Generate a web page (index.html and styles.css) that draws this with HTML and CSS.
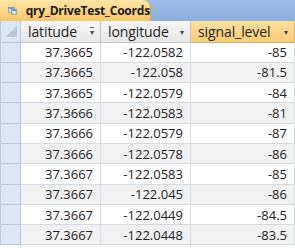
FILE: index.html
```html
<!DOCTYPE html>
<html lang="en">
<head>
  <meta charset="UTF-8" />
  <title>qry_DriveTest_Coords</title>
  <link rel="stylesheet" href="styles.css">
</head>
<body>
  <div class="tabs">
    <div class="tab">
      <svg class="tab-icon" width="16" height="14" viewBox="0 0 16 14">
        <rect x="0.5" y="0.5" width="11" height="9" fill="#fff" stroke="#4a6fa5"/>
        <rect x="1" y="1" width="10" height="2" fill="#5b86c5"/>
        <line x1="1" y1="5.5" x2="11" y2="5.5" stroke="#9ab"/>
        <line x1="1" y1="7.5" x2="11" y2="7.5" stroke="#9ab"/>
        <rect x="6.5" y="4.5" width="9" height="9" fill="#fff" stroke="#4a6fa5"/>
        <rect x="7" y="5" width="8" height="2" fill="#5b86c5"/>
        <line x1="7" y1="9.5" x2="15" y2="9.5" stroke="#9ab"/>
        <line x1="7" y1="11.5" x2="15" y2="11.5" stroke="#9ab"/>
      </svg>
      <span class="tab-title">qry_DriveTest_Coords</span>
    </div>
  </div>

  <table class="grid">
    <thead>
      <tr>
        <th class="sel sel-corner"><span class="corner"></span></th>
        <th class="col-lat"><div class="head">latitude <span class="arrow sorted">&#9662;</span></div></th>
        <th class="col-lon"><div class="head">longitude <span class="arrow">&#9662;</span></div></th>
        <th class="col-sig active"><div class="head">signal_level <span class="arrow">&#9662;</span></div></th>
      </tr>
    </thead>
    <tbody>
      <tr><td class="sel"></td><td>37.3665</td><td>-122.0582</td><td>-85</td></tr>
      <tr><td class="sel"></td><td>37.3665</td><td>-122.058</td><td>-81.5</td></tr>
      <tr><td class="sel"></td><td>37.3665</td><td>-122.0579</td><td>-84</td></tr>
      <tr><td class="sel"></td><td>37.3666</td><td>-122.0583</td><td>-81</td></tr>
      <tr><td class="sel"></td><td>37.3666</td><td>-122.0579</td><td>-87</td></tr>
      <tr><td class="sel"></td><td>37.3666</td><td>-122.0578</td><td>-86</td></tr>
      <tr><td class="sel"></td><td>37.3667</td><td>-122.0583</td><td>-85</td></tr>
      <tr><td class="sel"></td><td>37.3667</td><td>-122.045</td><td>-86</td></tr>
      <tr><td class="sel"></td><td>37.3667</td><td>-122.0449</td><td>-84.5</td></tr>
      <tr><td class="sel"></td><td>37.3667</td><td>-122.0448</td><td>-83.5</td></tr>
    </tbody>
  </table>
</body>
</html>
```

FILE: styles.css
```css
* { box-sizing: border-box; margin: 0; padding: 0; }
body {
  width: 295px;
  height: 248px;
  overflow: hidden;
  background: #fff;
  font-family: "Open Sans", "Liberation Sans", sans-serif;
  color: #222;
}
.tabs {
  height: 21px;
  background: linear-gradient(#9ebde6, #8aafe0);
  display: flex;
  align-items: flex-end;
}
.tab {
  width: 151px;
  height: 21px;
  display: flex;
  align-items: center;
  gap: 9px;
  padding-left: 8px;
  background: linear-gradient(#fde6a8, #f9c766);
  border-top-right-radius: 8px;
  border-right: 1px solid #d9a444;
}
.tab-title {
  font-size: 12px;
  font-weight: bold;
  color: #1b1b1b;
  letter-spacing: -0.2px;
}
.grid {
  border-collapse: collapse;
  table-layout: fixed;
  width: 294px;
  font-size: 13px;
}
.grid th {
  height: 21px;
  font-weight: normal;
  padding: 0 6px 0 7px;
  background: linear-gradient(#f7f7f7, #e7e7e7);
  border: 1px solid #c5c5c5;
  border-top: none;
  white-space: nowrap;
  color: #222;
}
.head {
  display: flex;
  justify-content: space-between;
  align-items: center;
  font-size: 14px;
  letter-spacing: -0.1px;
}
.grid th.active {
  background: linear-gradient(#fde0a2, #f9cc78);
  border-color: #e0b060;
}
.arrow {
  font-size: 8px;
  color: #444;
}
.arrow.sorted { border-top: 1px solid #666; line-height: 7px; }
.col-lat { width: 80px; }
.col-lon { width: 90px; }
.col-sig { width: 104px; }
.grid td {
  height: 20.3px;
  text-align: right;
  padding-right: 7px;
  border: 1px solid #d5dbe3;
  white-space: nowrap;
}
.grid tbody tr:nth-child(even) td { background: #f2f2f2; }
.grid th.sel, .grid td.sel {
  width: 20px;
  padding: 0;
  background: #dde7f3;
  border-color: #b8c8dc;
}
.grid tbody tr:nth-child(even) td.sel { background: #dde7f3; }
.corner {
  display: block;
  width: 11px;
  height: 11px;
  margin: 0 0 0 5px;
  background: linear-gradient(135deg, transparent 50%, #b9c7da 50%);
}
```
